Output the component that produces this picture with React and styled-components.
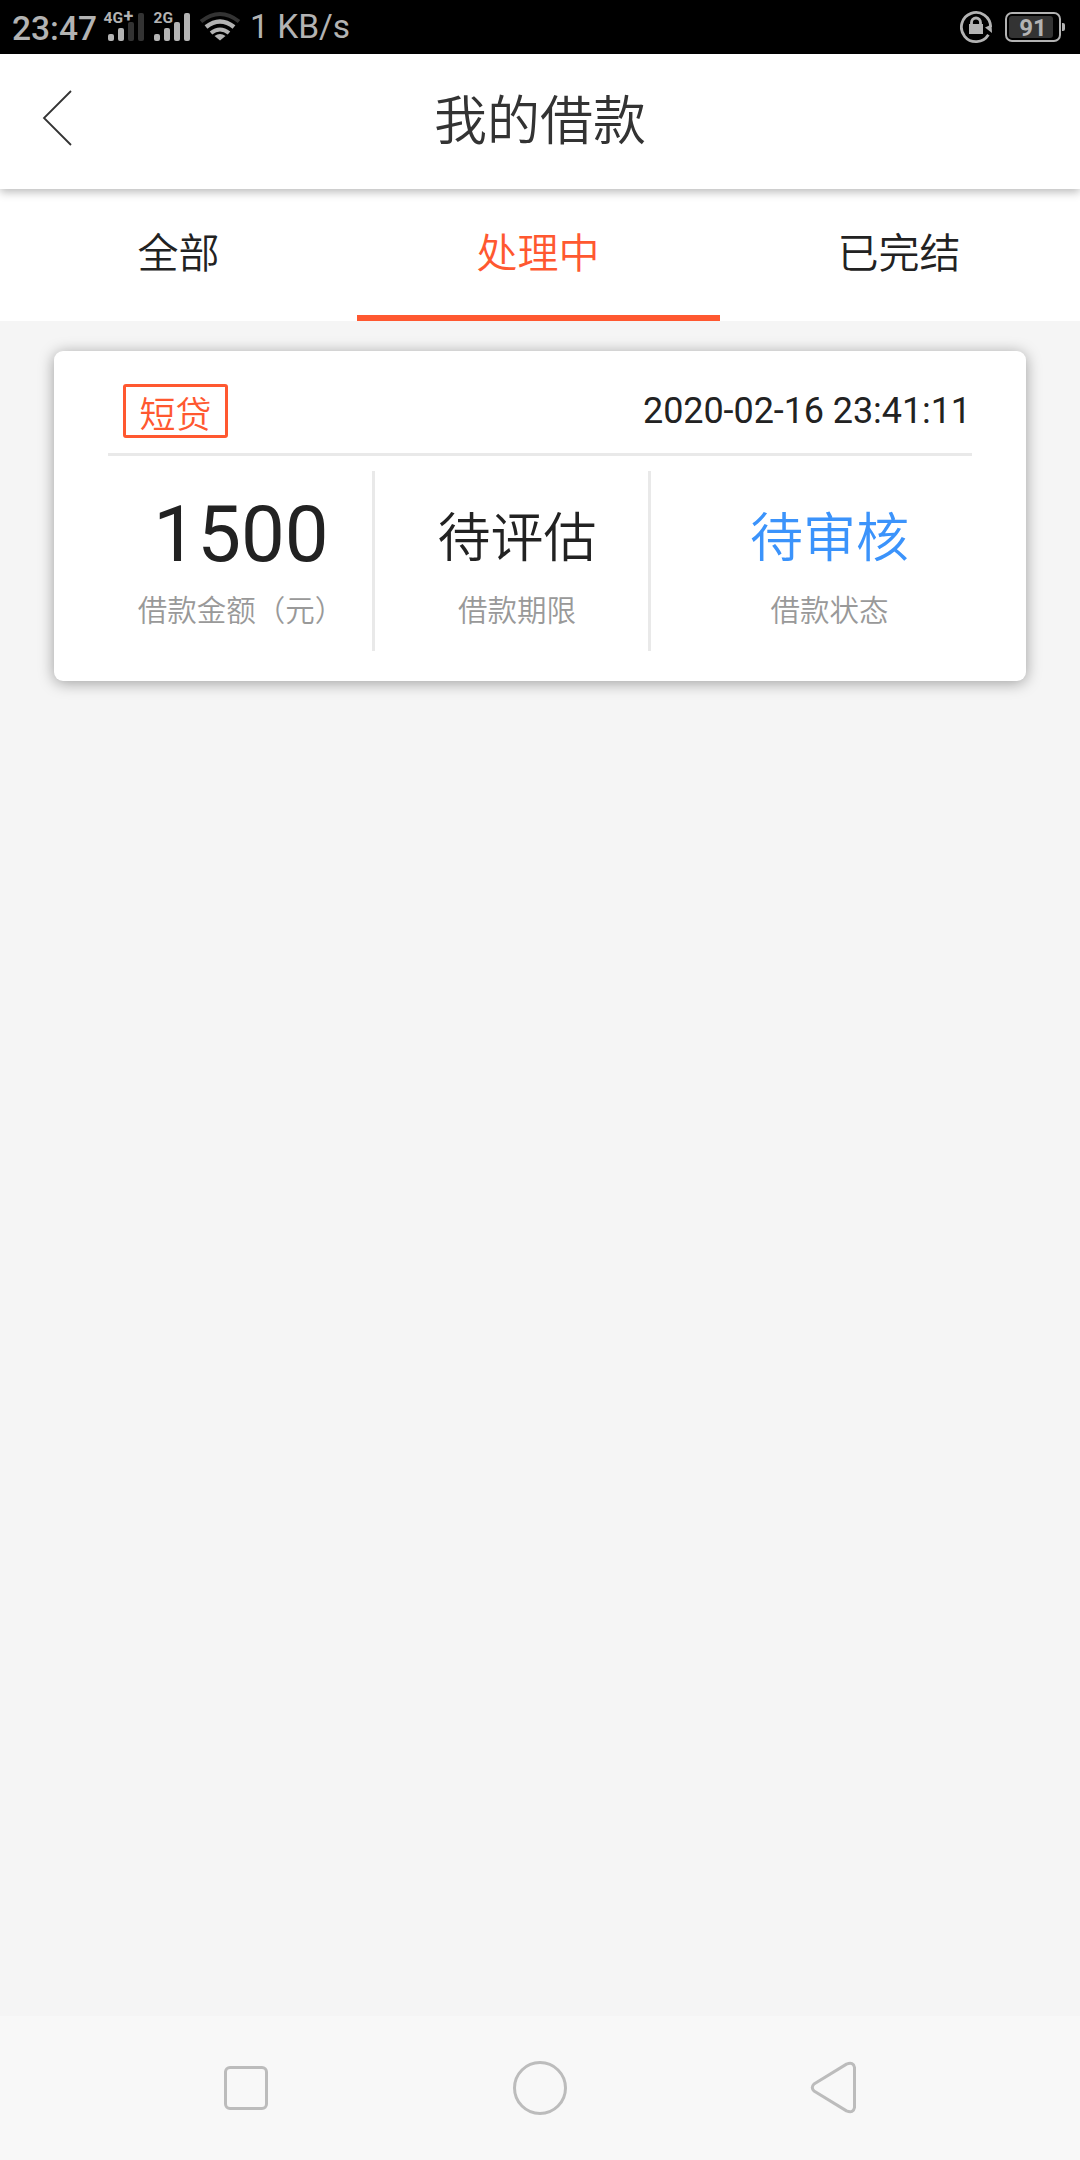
import React from "react";
import styled, { createGlobalStyle } from "styled-components";

const GlobalStyle = createGlobalStyle`
  * { box-sizing: border-box; }
  body {
    margin: 0;
    background: #f5f5f5;
    font-family: Roboto, "Noto Sans CJK SC", sans-serif;
    color: #222222;
  }
  svg { display: block; flex: none; }
`;

const accent = "#ff5830";
const statusColor = "#b3b3b3";
const dimColor = "#333333";

const Screen = styled.div`
  width: 1080px;
  height: 2160px;
  display: flex;
  flex-direction: column;
  overflow: hidden;
`;

const StatusBar = styled.div`
  height: 54px;
  flex: none;
  background: #000;
  color: ${statusColor};
  display: flex;
  justify-content: space-between;
  padding: 0 14px 0 12px;
`;

const StatusGroup = styled.div`
  display: flex;
  align-items: flex-start;
`;

const Clock = styled.span`
  width: 92px;
  padding-top: 9px;
  font-size: 33.5px;
  line-height: 40px;
  font-weight: 500;
  white-space: nowrap;
`;

const NetSpeed = styled.span`
  padding: 7px 0 0 9px;
  font-size: 33.5px;
  line-height: 40px;
  white-space: nowrap;
`;

const Header = styled.header`
  height: 135px;
  flex: none;
  position: relative;
  z-index: 1;
  background: #fff;
  display: grid;
  grid-template-columns: 140px 1fr 140px;
  box-shadow: 0 3px 9px rgba(0, 0, 0, 0.28);
`;

const BackButton = styled.button`
  border: 0;
  margin: 0;
  padding: 36px 0 0 42px;
  background: none;
  display: flex;
  align-items: flex-start;
`;

const Title = styled.h1`
  margin: 0;
  padding-top: 29px;
  font-size: 53px;
  line-height: 78px;
  font-weight: 350;
  color: #333;
  text-align: center;
`;

const Tabs = styled.nav`
  height: 132px;
  flex: none;
  background: #fff;
  display: grid;
  grid-template-columns: 357px 363px 360px;
`;

const Tab = styled.div`
  padding: 5px ${(p) => p.$inset || 0}px 0 0;
  border-bottom: 6px solid ${(p) => (p.$active ? accent : "transparent")};
  color: ${(p) => (p.$active ? accent : "#222222")};
  font-size: 41px;
  font-weight: 350;
  line-height: 121px;
  text-align: center;
`;

const Content = styled.main`
  flex: 1;
  padding: 30px 54px;
`;

const Card = styled.section`
  height: 330px;
  padding: 0 54px;
  border-radius: 9px;
  background: #fff;
  box-shadow: 0 2px 15px rgba(0, 0, 0, 0.36);
`;

const CardHead = styled.div`
  height: 105px;
  padding: 33px 1px 0 15px;
  border-bottom: 3px solid #e9e9e9;
  display: flex;
  justify-content: space-between;
  align-items: flex-start;
`;

const Tag = styled.span`
  width: 105px;
  height: 54px;
  padding-top: 4px;
  border: 3px solid ${accent};
  border-radius: 3px;
  color: ${accent};
  font-size: 36px;
  line-height: 51px;
  font-weight: 350;
  text-align: center;
`;

const Time = styled.time`
  padding-top: 5px;
  font-size: 36px;
  line-height: 44px;
  letter-spacing: -0.08px;
`;

const Stats = styled.div`
  height: 180px;
  margin-top: 15px;
  display: grid;
  grid-template-columns: 267px 276px 321px;
`;

const Stat = styled.div`
  padding-left: ${(p) => p.$indent}px;
  border-right: ${(p) => (p.$last ? "0" : "3px solid #e9e9e9")};
  display: flex;
  flex-direction: column;
  align-items: center;
`;

const Value = styled.div`
  height: 117px;
  padding-top: ${(p) => (p.$large ? 18 : 19)}px;
  font-size: ${(p) => (p.$large ? 78 : 53)}px;
  line-height: ${(p) => (p.$large ? 92 : 99)}px;
  font-weight: ${(p) => (p.$large ? 400 : 350)};
  color: ${(p) => p.$color || "#222222"};
  white-space: nowrap;
`;

const Label = styled.div`
  font-size: 29.5px;
  line-height: 46px;
  font-weight: 350;
  color: #999;
  white-space: nowrap;
`;

const NavBar = styled.footer`
  height: 144px;
  flex: none;
  background: #f8f8f8;
  display: flex;
  justify-content: space-between;
  align-items: center;
  padding: 0 219px;
`;

const Cell = ({ x, label, levels, plus }) => (
  <svg width={plus ? 42 : 40} height="54" viewBox={`0 0 ${plus ? 42 : 40} 54`} overflow="visible">
    <text x={plus ? -0.5 : 0.5} y="23" fontFamily="Roboto" fontWeight="700" fontSize="15.5" fill={statusColor}>{label}</text>
    {plus && <text x="19.5" y="22" fontFamily="Roboto" fontWeight="700" fontSize="18" fill={statusColor}>+</text>}
    {[[34, 7], [28, 13], [22, 19], [13, 28]].map(([y, h], i) => (
      <rect key={i} x={x + i * 10} y={y} width="6" height={h} rx="2" fill={i < levels ? statusColor : dimColor} />
    ))}
  </svg>
);

const Wifi = () => (
  <svg width="42" height="54" viewBox="0 0 42 54" fill="none" strokeWidth="4">
    <path d="M2 21.500Q21 6.500 40 21.500" stroke={dimColor} />
    <path d="M7 27Q21 16 35 27" stroke={statusColor} strokeWidth="4.500" />
    <path d="M12 33Q21 26 30 33" stroke={statusColor} />
    <path d="M15.500 36Q21 32 26.500 36L21 40.500Z" fill={statusColor} />
  </svg>
);

const RotationLock = () => (
  <svg width="33" height="54" viewBox="0 0 33 54" fill="none">
    <path d="M28.400 34.800A14.600 14.600 0 1 1 30.600 27" stroke={statusColor} strokeWidth="2.800" />
    <path d="M25 27.500L31.500 24.500L32 33Z" fill={statusColor} />
    <rect x="9" y="24" width="14" height="10" fill={statusColor} />
    <path d="M11.500 25v-2.500a4.500 4.500 0 0 1 9 0V25" stroke={statusColor} strokeWidth="2.800" />
  </svg>
);

const Battery = () => (
  <svg width="61" height="54" viewBox="0 0 61 54">
    <rect x="1" y="13" width="54" height="28" rx="6" fill="none" stroke={statusColor} strokeWidth="2" />
    <rect x="4" y="16" width="44" height="22" rx="3" fill={dimColor} />
    <path d="M57 23h1a2 2 0 0 1 2 2v4a2 2 0 0 1-2 2h-1z" fill={statusColor} />
    <text x="28" y="36" textAnchor="middle" fontFamily="Roboto" fontWeight="700" fontSize="24" fill={statusColor}>91</text>
  </svg>
);

const IconGap = styled.span`
  width: ${(p) => p.$w}px;
  flex: none;
`;

const stats = [
  { value: "1500", label: "借款金额（元）", large: true, indent: 2 },
  { value: "待评估", label: "借款期限", indent: 11 },
  { value: "待审核", label: "借款状态", indent: 36, color: "#3b93fb", last: true },
];

export default function App() {
  return (
    <Screen>
      <GlobalStyle />
      <StatusBar>
        <StatusGroup>
          <Clock>23:47</Clock>
          <Cell x={4} label="4G" levels={2} plus />
          <IconGap $w={7} />
          <Cell x={1} label="2G" levels={4} />
          <IconGap $w={6} />
          <Wifi />
          <NetSpeed>1 KB/s</NetSpeed>
        </StatusGroup>
        <StatusGroup>
          <RotationLock />
          <IconGap $w={12} />
          <Battery />
        </StatusGroup>
      </StatusBar>

      <Header>
        <BackButton aria-label="返回">
          <svg width="32" height="56" viewBox="0 0 32 56" fill="none" stroke="#333" strokeWidth="1.800">
            <path d="M29 1L2 28L29 55" />
          </svg>
        </BackButton>
        <Title>我的借款</Title>
      </Header>

      <Tabs>
        <Tab>全部</Tab>
        <Tab $active $inset={1}>处理中</Tab>
        <Tab $inset={2}>已完结</Tab>
      </Tabs>

      <Content>
        <Card>
          <CardHead>
            <Tag>短贷</Tag>
            <Time>2020-02-16 23:41:11</Time>
          </CardHead>
          <Stats>
            {stats.map((s) => (
              <Stat key={s.label} $indent={s.indent} $last={s.last}>
                <Value $large={s.large} $color={s.color}>{s.value}</Value>
                <Label>{s.label}</Label>
              </Stat>
            ))}
          </Stats>
        </Card>
      </Content>

      <NavBar>
        <svg width="54" height="60" viewBox="0 0 54 60" fill="none" stroke="#bcbcbc" strokeWidth="3">
          <rect x="6.500" y="9.500" width="41" height="41" rx="4.500" />
        </svg>
        <svg width="60" height="60" viewBox="0 0 60 60" fill="none" stroke="#bcbcbc" strokeWidth="3">
          <circle cx="30" cy="30" r="25.500" />
        </svg>
        <svg width="54" height="60" viewBox="0 0 54 60" fill="none" stroke="#bcbcbc" strokeWidth="3" strokeLinejoin="round">
          <path d="M39.500 6.100L7 26Q3.500 29.500 7 33L39.500 52.900Q46.500 55.500 47.500 49.500V9.500Q46.500 3.500 39.500 6.100Z" />
        </svg>
      </NavBar>
    </Screen>
  );
}
